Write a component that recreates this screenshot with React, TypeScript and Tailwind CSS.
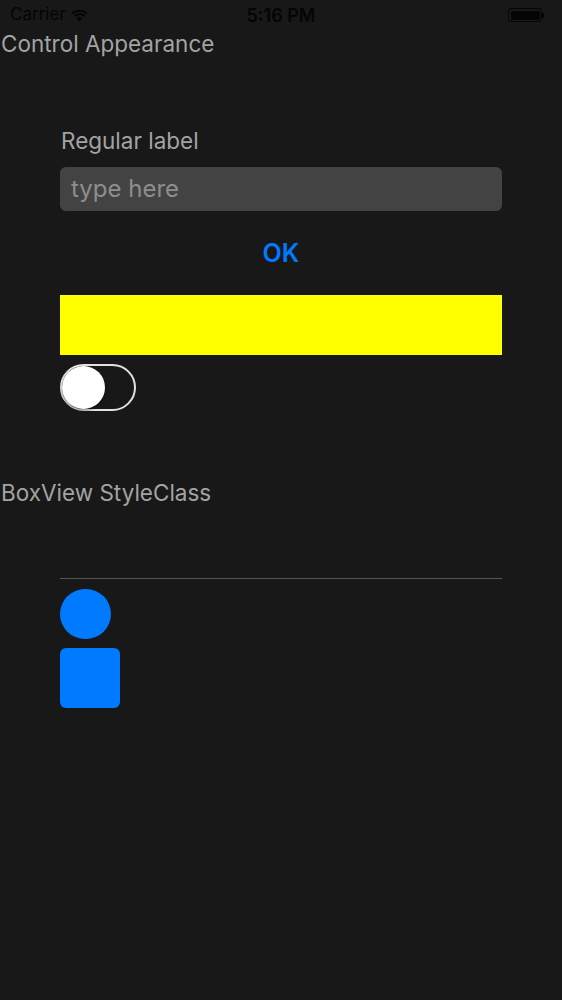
import React from "react";

export default function App() {
  return (
    <div
      className="w-full h-[1000px] bg-[#181818] flex flex-col"
      style={{ fontFamily: "Inter, 'Noto Sans', sans-serif" }}
    >
      {/* status bar */}
      <div className="relative h-[30px] flex items-center px-[10px] text-[17px] text-[#050505]">
        <span>Carrier</span>
        <svg className="ml-[5px]" width="17" height="13" viewBox="0 0 17 13">
          <path d="M8.5 12.5 L5.6 9.3 A4.2 4.2 0 0 1 11.4 9.3 Z" fill="#050505" />
          <path d="M3.6 7.2 A7 7 0 0 1 13.4 7.2" stroke="#050505" strokeWidth="1.8" fill="none" />
          <path d="M1.2 4.6 A10.6 10.6 0 0 1 15.8 4.6" stroke="#050505" strokeWidth="1.8" fill="none" />
        </svg>
        <span className="absolute left-0 right-0 text-center font-semibold text-[18px]">5:16 PM</span>
        <div className="ml-auto mr-[8px] flex items-center">
          <div className="w-[34px] h-[14px] rounded-[3px] border border-[#050505] p-[1.5px]">
            <div className="w-full h-full bg-[#050505] rounded-[1.5px]" />
          </div>
          <div className="w-[2px] h-[5px] bg-[#050505] rounded-r-[1px]" />
        </div>
      </div>

      <div className="pl-[1px] text-[22.5px] leading-[27px] text-[#a3a3a3]">Control Appearance</div>

      <div className="px-[60px] flex flex-col">
        <div className="mt-[70px] pl-[1px] text-[22.5px] leading-[27px] text-[#a3a3a3]">Regular label</div>
        <div className="mt-[13px] h-[44px] rounded-[6px] bg-[#434343] flex items-center px-[11px] text-[24px] text-[#8e8e8e]">
          type here
        </div>
        <div className="mt-[20px] h-[46px] flex items-center justify-center text-[25px] font-semibold text-[#007aff]">
          OK
        </div>
        <div className="mt-[18px] h-[60px] bg-[#ffff00]" />
        <div className="mt-[9px] w-[76px] h-[47px] rounded-full border-[2px] border-[#e2e2e2] p-[0px] flex items-center">
          <div className="w-[43px] h-[43px] rounded-full bg-white shadow-[0_2px_3px_rgba(0,0,0,0.35)]" />
        </div>
      </div>

      <div className="mt-[68px] pl-[1px] text-[22.5px] leading-[27px] text-[#a3a3a3]">BoxView StyleClass</div>

      <div className="px-[60px] flex flex-col">
        <div className="mt-[72px] h-px bg-[#555555]" />
        <div className="mt-[10px] w-[51px] h-[50px] rounded-full bg-[#007aff]" />
        <div className="mt-[9px] w-[60px] h-[60px] rounded-[6px] bg-[#007aff]" />
      </div>
    </div>
  );
}
